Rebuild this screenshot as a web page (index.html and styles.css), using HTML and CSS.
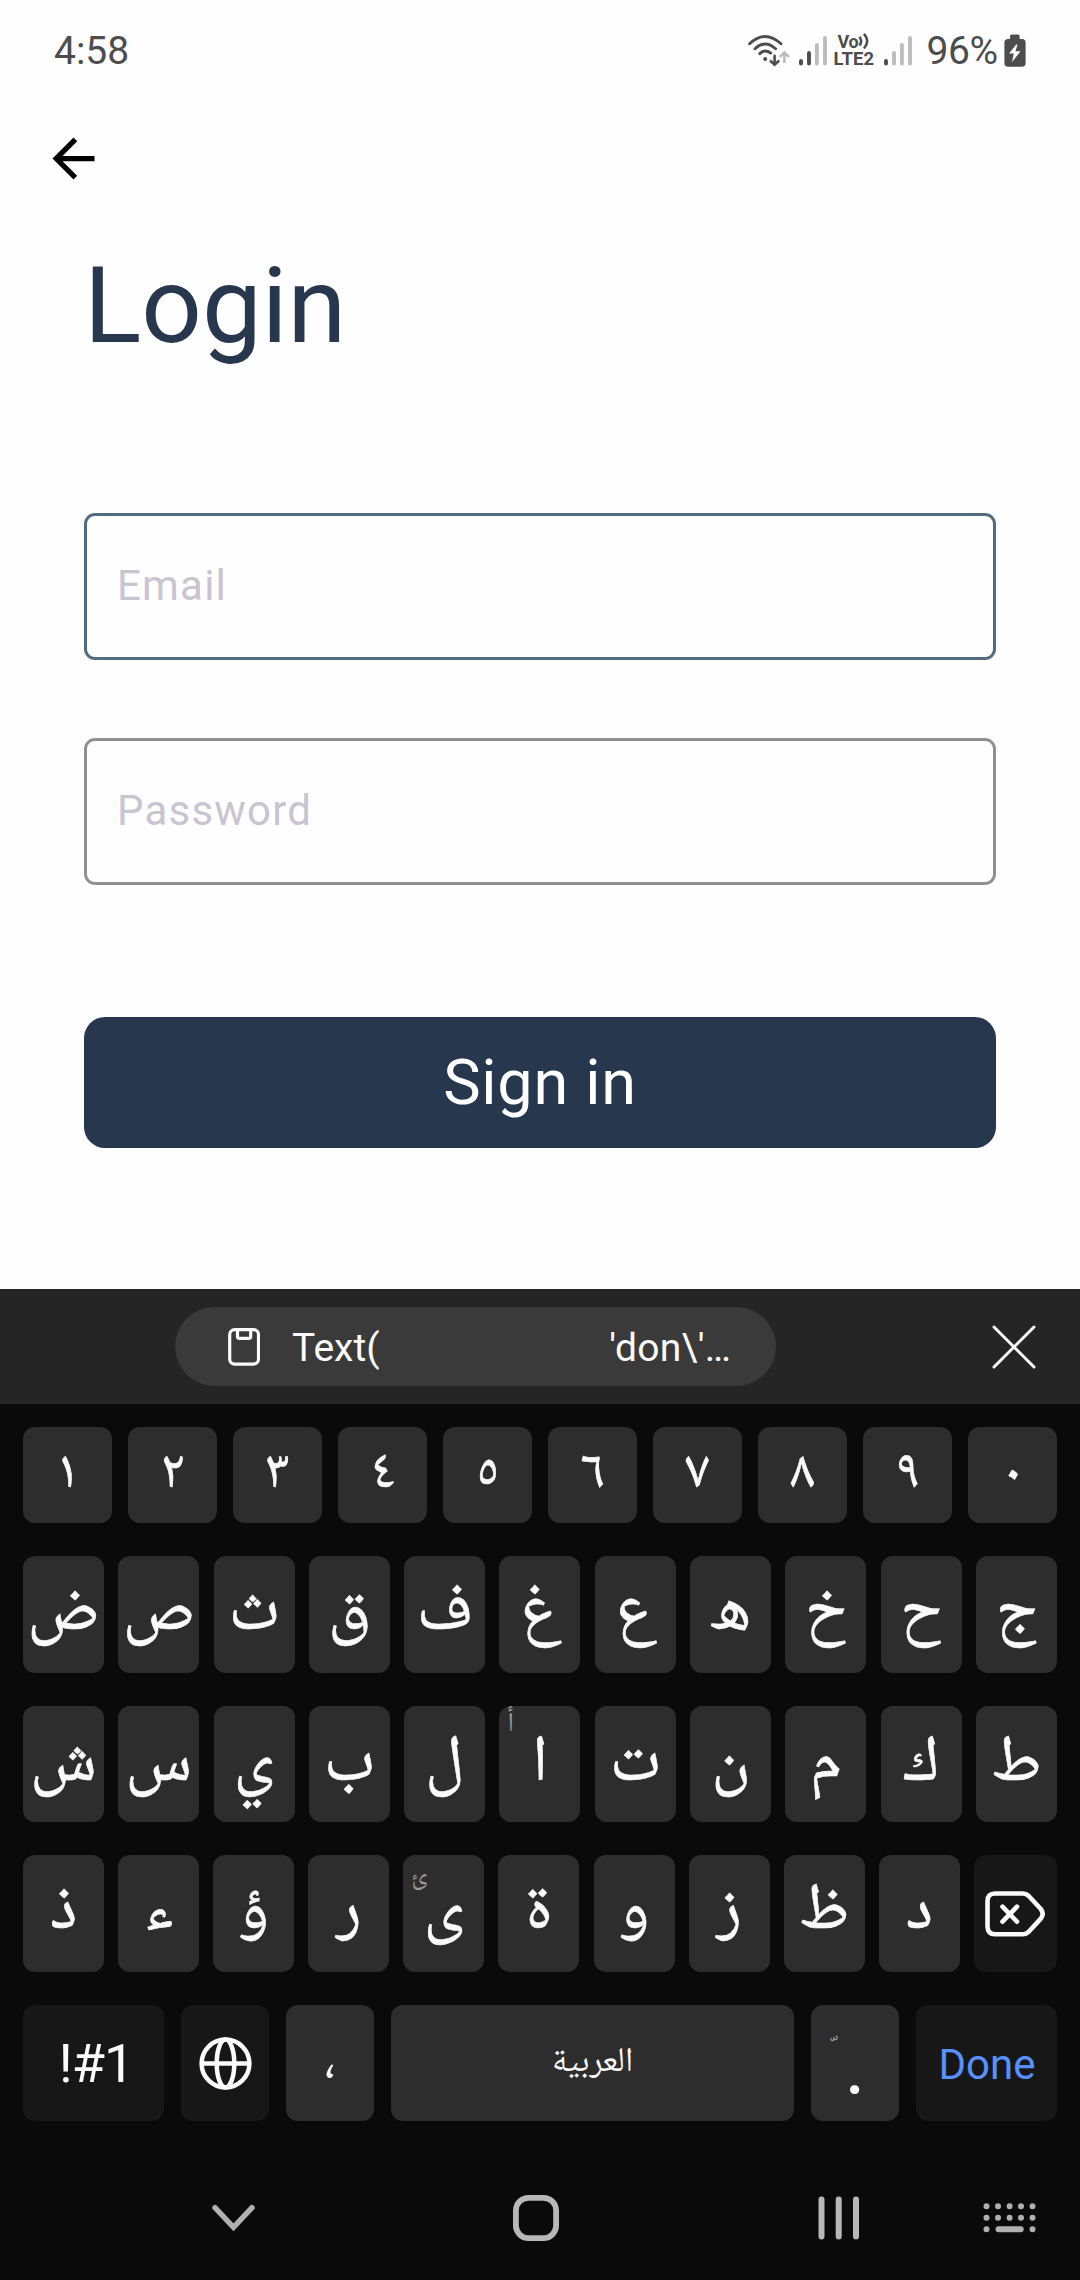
FILE: index.html
```html
<!DOCTYPE html>
<html lang="en">
<head>
<meta charset="utf-8">
<title>Login</title>
<link rel="stylesheet" href="styles.css">
</head>
<body>
<main class="screen">
  <header class="status">
    <span class="clock">4:58</span>
    <div class="status-icons">
      <svg class="wifi" width="42" height="34" viewBox="0 0 42 34" fill="none" stroke="#4d4d4d" stroke-width="2.900" stroke-linecap="round">
        <path d="M1.600 9.800Q17 -4.800 33 9.800M7 14.800Q17 5.200 27.600 14.800M11.800 19.600Q16.800 14.600 22.600 19"/>
        <circle cx="17.200" cy="25" r="2" fill="#4d4d4d" stroke="none"/>
        <path d="M26.600 21.800V30.500M22.800 27.200L26.600 30.800L30.400 27.200" stroke-width="2.600"/>
        <path d="M36.400 28V19M32.600 22.200L36.400 18.600L40.200 22.200" stroke="#bdbdbd" stroke-width="2.600"/>
      </svg>
      <svg class="signal" width="28" height="30" viewBox="0 0 28 30" stroke-width="3.900" stroke-linecap="round">
        <path d="M2 25V27.600M10 17V27.600" stroke="#4d4d4d"/>
        <path d="M17.900 9V27.600M26 2V27.600" stroke="#bdbdbd"/>
      </svg>
      <div class="volte">
        <div class="vo">Vo<svg width="12" height="17" viewBox="0 0 12 17" fill="none" stroke="#4d4d4d" stroke-width="2.500"><path d="M1.500 3.800Q4.800 8 1.500 12.400M6 .8Q12.400 8 6 15.500"/></svg></div>
        <div class="lte">LTE2</div>
      </div>
      <svg class="signal2" width="28" height="30" viewBox="0 0 28 30" stroke-width="3.900" stroke-linecap="round">
        <path d="M2 25V27.600" stroke="#4d4d4d"/>
        <path d="M10 17V27.600M17.900 9V27.600M26 2V27.600" stroke="#bdbdbd"/>
      </svg>
      <span class="percent">96%</span>
      <svg class="battery" width="22" height="34" viewBox="0 0 22 34">
        <path fill="#4d4d4d" d="M6 5V2Q6 .4 7.600 .4H14Q15.600 .4 15.600 2V5H18Q21.600 5 21.600 8.600V29Q21.600 32.800 18 32.800H4Q.4 32.800 .4 29V8.600Q.4 5 4 5Z"/>
        <path fill="#fefefe" d="M12.200 10.500L5 19.500H9.800L8 28L16.500 17.200H11.500L13.500 10.500Z"/>
      </svg>
    </div>
  </header>

  <svg class="back" width="63" height="63" viewBox="0 0 24 24"><path d="M20 11H7.830l5.590-5.590L12 4l-8 8 8 8 1.410-1.410L7.830 13H20v-2z"/></svg>

  <section class="form">
    <h1 class="title">Login</h1>
    <div class="field focused">Email</div>
    <div class="field">Password</div>
    <div class="submit">Sign in</div>
  </section>

  <section class="keyboard">
    <div class="suggest">
      <div class="clip">
        <svg width="32" height="38" viewBox="0 0 32 38" fill="none" stroke="#fafafa" stroke-width="3.200">
          <rect x="1.700" y="1.700" width="28.800" height="34.400" rx="5"/>
          <path d="M9.500 2V8.500Q9.500 10.300 11.300 10.300H20.900Q22.700 10.300 22.700 8.500V2"/>
        </svg>
        <span class="clip-a">Text(</span><span class="clip-b">'don\'…</span>
      </div>
      <svg class="close" width="44" height="44" viewBox="0 0 44 44" stroke="#fafafa" stroke-width="3" stroke-linecap="round"><path d="M2 2L42 42M42 2L2 42"/></svg>
    </div>

    <div class="keys">
      <div class="row nums">
        <b class="key">١</b><b class="key">٢</b><b class="key">٣</b><b class="key">٤</b><b class="key">٥</b><b class="key">٦</b><b class="key">٧</b><b class="key">٨</b><b class="key">٩</b><b class="key">٠</b>
      </div>
      <div class="row letters">
        <b class="key">ض</b><b class="key">ص</b><b class="key">ث</b><b class="key">ق</b><b class="key">ف</b><b class="key">غ</b><b class="key">ع</b><b class="key">ه</b><b class="key">خ</b><b class="key">ح</b><b class="key">ج</b>
      </div>
      <div class="row letters short">
        <b class="key">ش</b><b class="key">س</b><b class="key">ي</b><b class="key">ب</b><b class="key">ل</b><b class="key">ا<i class="hint hint-alef">أ</i></b><b class="key">ت</b><b class="key">ن</b><b class="key">م</b><b class="key">ك</b><b class="key">ط</b>
      </div>
      <div class="row letters last">
        <b class="key">ذ</b><b class="key">ء</b><b class="key">ؤ</b><b class="key">ر</b><b class="key">ى<i class="hint hint-yeh">ئ</i></b><b class="key">ة</b><b class="key">و</b><b class="key">ز</b><b class="key">ظ</b><b class="key">د</b>
        <div class="key dark delete">
          <svg width="60" height="46" viewBox="0 0 60 46" fill="none" stroke="#fafafa" stroke-width="4.600" stroke-linejoin="round" stroke-linecap="round">
            <path d="M10 2.500H38Q41 2.500 43.500 4.800L55.800 18Q59.500 22.800 55.800 27.600L43.500 41Q41 43.200 38 43.200H10Q2.500 43.200 2.500 35.500V10Q2.500 2.500 10 2.500Z"/>
            <path d="M17.500 15.700L32 30.700M32 15.700L17.500 30.700"/>
          </svg>
        </div>
      </div>
      <div class="row bottom">
        <div class="key dark sym">!#1</div>
        <div class="key dark">
          <svg width="53" height="53" viewBox="0 0 53 53" fill="none" stroke="#fafafa" stroke-width="4.500"><circle cx="26.500" cy="26.500" r="23.900"/><ellipse cx="26.500" cy="26.500" rx="8.800" ry="23.900"/><path d="M2.500 26.500H50.500"/></svg>
        </div>
        <div class="key comma">،</div>
        <div class="key space">العربية</div>
        <div class="key period">.<i class="hint hint-shadda">&nbsp;&#x0651;</i></div>
        <div class="key dark done">Done</div>
      </div>
    </div>

    <nav class="nav">
      <svg class="nav-hide" width="44" height="28" viewBox="0 0 44 28" fill="none" stroke="#b0b0b0" stroke-width="5.400" stroke-linecap="round"><path d="M3 3.700L21.500 23.300L40 3.700"/></svg>
      <svg class="nav-home" width="46" height="46" viewBox="0 0 46 46" fill="none" stroke="#b8b8b8" stroke-width="5.800"><rect x="2.900" y="2.900" width="40.200" height="40.200" rx="12.500"/></svg>
      <svg class="nav-recent" width="42" height="44" viewBox="0 0 42 44" stroke="#b8b8b8" stroke-width="6" stroke-linecap="round"><path d="M3.500 3.500V40.500M20.700 3.500V40.500M38 3.500V40.500"/></svg>
      <svg class="nav-kbd" width="54" height="30" viewBox="0 0 54 30" fill="none" stroke="#b0b0b0" stroke-width="6" stroke-linecap="round">
        <path d="M3.500 3.300h0M15 3.300h0M26.600 3.300h0M38 3.300h0M49.500 3.300h0M3.500 14.800h0M15 14.800h0M26.600 14.800h0M38 14.800h0M49.500 14.800h0M3.500 26.300h0M15.500 26.300H37.700M49.500 26.300h0"/>
      </svg>
    </nav>
  </section>
</main>
</body>
</html>
```
FILE: styles.css
```css
* { box-sizing: border-box; }
body {
  margin: 0;
  background: #fefefe;
  font-family: Roboto, sans-serif;
}
svg { display: block; flex: none; }
.screen {
  width: 1080px;
  height: 2280px;
  display: flex;
  flex-direction: column;
  overflow: hidden;
}

/* status bar */
.status {
  height: 101px;
  padding: 0 54px;
  display: flex;
  align-items: center;
  justify-content: space-between;
  font-size: 39px;
  color: #4d4d4d;
}
.status-icons {
  display: flex;
  align-items: center;
  margin-right: 0.500px;
}
.signal, .signal2 { margin-left: 9px; }
.volte {
  width: 42px;
  margin-left: 7px;
  font-weight: 700;
}
.vo {
  display: flex;
  align-items: center;
  padding-left: 4px;
  font-size: 18px;
  line-height: 17px;
  letter-spacing: -0.500px;
}
.lte {
  font-size: 18.500px;
  line-height: 18px;
}
.signal2 { margin-left: 8px; }
.percent { margin-left: 15px; letter-spacing: -0.500px; }
.battery { margin-left: 6px; }

.back { margin: 26px 0 0 42px; }

/* form */
.form { padding: 54px 84px 0; height: 1099px; }
.title {
  margin: 0 0 145px;
  font-size: 106.400px;
  line-height: 124px;
  font-weight: 400;
  color: #27374d;
}
.field {
  height: 147px;
  margin-bottom: 78px;
  padding: 0 30px 2px;
  border: 3px solid #939094;
  border-radius: 11px;
  display: flex;
  align-items: center;
  font-size: 42px;
  letter-spacing: 1.200px;
  color: #cac4d0;
}
.focused { border-color: #526d82; }
.submit {
  height: 131px;
  margin-top: 132px;
  border-radius: 21px;
  background: #27374d;
  color: #fff;
  display: flex;
  align-items: center;
  justify-content: center;
  font-size: 63px;
  letter-spacing: 0.700px;
}

/* keyboard */
.keyboard {
  height: 991px;
  background: #0a0a0a;
  color: #fafafa;
}
.suggest {
  height: 115px;
  padding: 0 44px 0 175px;
  background: #252525;
  display: flex;
  align-items: center;
  justify-content: space-between;
}
.clip {
  width: 601px;
  height: 79px;
  padding: 0 45px 0 53px;
  border-radius: 40px;
  background: #3a3a3a;
  display: flex;
  align-items: center;
  font-size: 39px;
}
.clip-a, .clip-b { padding-top: 3px; }
.clip-a { margin-left: 32px; }
.clip-b { margin-left: auto; letter-spacing: 0.200px; }
.keys {
  padding: 23px 23px 0;
  display: flex;
  flex-direction: column;
  gap: 33px;
}
.row {
  height: 117px;
  display: flex;
  justify-content: space-between;
}
.key {
  position: relative;
  display: flex;
  align-items: center;
  justify-content: center;
  border-radius: 12px;
  background: #2d2d2d;
  font-weight: 400;
}
.dark { background: #171717; }
.nums, .letters, .comma, .space, .hint {
  font-family: "Noto Naskh Arabic", "DejaVu Sans", sans-serif;
}
.nums, .letters { -webkit-text-stroke: 0.600px #fafafa; }
.nums { height: 96px; font-size: 54px; }
.nums .key { width: 89px; }
.letters { font-size: 65.500px; }
.letters .key { width: 81px; line-height: 112px; }
.letters .delete { width: 83px; }
.short { height: 116px; }
.short .key { padding-top: 3px; }
.last .key { padding-top: 1px; }
.letters .hint, .hint {
  position: absolute;
  font-style: normal;
  color: #999;
  line-height: 1;
  -webkit-text-stroke: 0;
}
.hint-alef { left: 8px; top: 6px; font-size: 27px; }
.hint-yeh { left: 8px; top: 9px; font-size: 26px; }
.hint-shadda { left: 19px; top: 20px; font-size: 38px; }
.bottom { height: 116px; }
.bottom .key { width: 88px; }
.bottom .sym { width: 141px; padding: 0 0 0 5px; font-size: 54px; letter-spacing: -1px; }
.bottom .space { width: 403px; padding-top: 1px; font-size: 34.500px; }
.bottom .done { width: 141px; padding: 2px 0 0 1px; font-size: 42px; color: #5791ff; }
.bottom .comma { font-size: 52px; }
.bottom .period { padding-top: 5px; font-size: 82px; }

/* navigation bar */
.nav {
  height: 159px;
  padding: 34px 43px 0 212px;
  display: flex;
  align-items: center;
}
.nav-home { margin-left: 257px; }
.nav-recent { margin-left: 259px; }
.nav-kbd { margin-left: auto; }
```
